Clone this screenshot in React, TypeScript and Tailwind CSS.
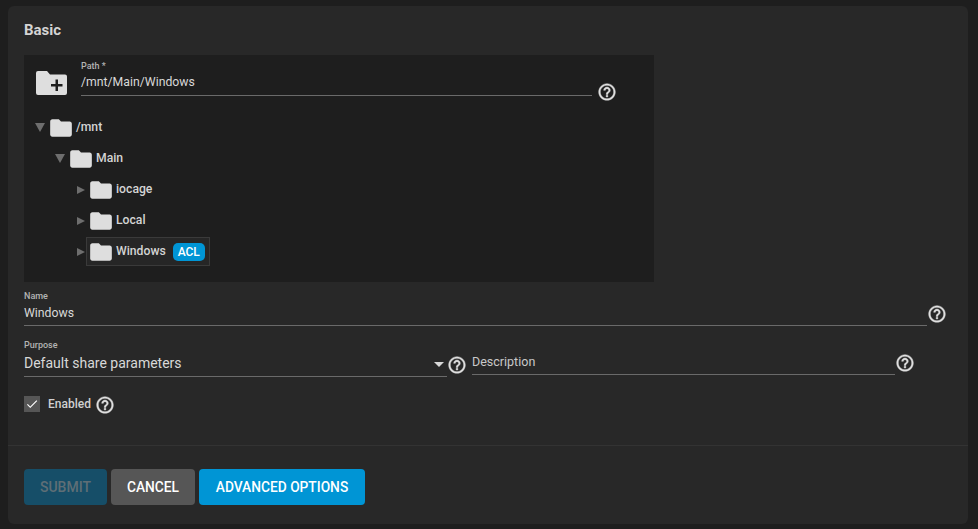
import { MdCheck, MdFolder } from 'react-icons/md';

const ROWS = [
  { name: '/mnt', indent: 'pl-[11px]', open: true },
  { name: 'Main', indent: 'pl-[31px]', open: true },
  { name: 'iocage', indent: 'pl-[51px]', open: false },
  { name: 'Local', indent: 'pl-[51px]', open: false },
  { name: 'Windows', indent: 'pl-[51px]', open: false, acl: true },
];

function Help({ className = '' }: { className?: string }) {
  return (
    <svg
      viewBox="0 0 24 24"
      fill="currentColor"
      stroke="currentColor"
      strokeWidth="0.5"
      className={`h-5 w-5 shrink-0 text-[#e0e0e0] ${className}`}
    >
      <path d="M11 18h2v-2h-2v2zm1-16C6.480 2 2 6.480 2 12s4.480 10 10 10 10-4.480 10-10S17.520 2 12 2zm0 18c-4.410 0-8-3.590-8-8s3.590-8 8-8 8 3.590 8 8-3.590 8-8 8zm0-14c-2.210 0-4 1.790-4 4h2c0-1.100.9-2 2-2s2 .9 2 2c0 2-3 1.750-3 5h2c0-2.250 3-2.500 3-5 0-2.210-1.790-4-4-4z" />
    </svg>
  );
}

function TreeRow({ row }: { row: (typeof ROWS)[number] }) {
  return (
    <div className={`flex h-[31px] items-center ${row.indent}`}>
      {row.open ? (
        <span className="h-0 w-0 border-x-[5px] border-t-[9px] border-x-transparent border-t-[#6e6e6e]" />
      ) : (
        <span className="ml-[2px] h-0 w-0 border-y-[4.5px] border-l-[8px] border-y-transparent border-l-[#6e6e6e]" />
      )}
      <div
        className={`flex h-[29px] items-center ${row.open ? 'ml-[2px]' : 'ml-[1px] pl-[1px]'} ${
          row.acl ? 'w-[124px] border border-[#3a3a3a] bg-[#262626]' : ''
        }`}
      >
        <MdFolder className={`shrink-0 text-[26px] text-[#dedede] ${row.acl ? '' : 'ml-[1px]'}`} />
        <span className="ml-[2px] text-[12.2px] font-medium text-[#d4d4d4]">{row.name}</span>
        {row.acl && (
          <span className="ml-[7px] flex h-[18px] w-[32px] items-center justify-center rounded-[5px] bg-[#0095d5] text-[12px] font-medium text-white">
            ACL
          </span>
        )}
      </div>
    </div>
  );
}

export default function App() {
  return (
    <div className="h-[529px] w-[978px] overflow-hidden bg-[#1e1e1e] pl-2 pt-[6px] font-['Roboto',sans-serif]">
      <div className="h-[518px] w-[960px] rounded-[6px] bg-[#282828]">
        <div className="h-[439px] px-4 pt-[15px]">
          <h3 className="text-[15px] leading-[18px] font-bold text-[#d4d4d4]">Basic</h3>

          <div className="mt-[16px] h-[227px] w-[630px] bg-[#1e1e1e] pt-[6px]">
            <div className="flex items-start pl-[12px]">
              <svg viewBox="0 0 31 24" className="mt-[10px] h-[24px] w-[31px] shrink-0">
                <path
                  d="M2 0h9l3 3.500h15a2 2 0 0 1 2 2V22a2 2 0 0 1-2 2H2a2 2 0 0 1-2-2V2a2 2 0 0 1 2-2z"
                  fill="#dedede"
                />
                <path d="M19.500 8.500h2.500v4.500h4.500v2.500H22V20h-2.500v-4.500H15V13h4.500z" fill="#1e1e1e" />
              </svg>
              <div className="ml-[14px] w-[511px]">
                <div className="text-[9px] leading-[11px] font-medium text-[#b4b4b4]">Path *</div>
                <div className="mt-[1px] h-[23px] border-b border-[#6a6a6a] text-[12.25px] leading-[18px] text-[#d8d8d8]">
                  /mnt/Main/Windows
                </div>
              </div>
              <Help className="ml-[5px] mt-[21px]" />
            </div>

            <div className="mt-[10px]">
              {ROWS.map((row) => (
                <TreeRow key={row.name} row={row} />
              ))}
            </div>
          </div>

          <div className="mt-[9px] flex items-start">
            <div className="w-[903px]">
              <div className="text-[9px] leading-[11px] font-medium text-[#b4b4b4]">Name</div>
              <div className="mt-[1px] h-[23px] border-b border-[#6a6a6a] text-[12.25px] leading-[20px] text-[#d8d8d8]">
                Windows
              </div>
            </div>
            <Help className="mt-[13px]" />
          </div>

          <div className="mt-[14px] flex items-start">
            <div className="w-[423px]">
              <div className="text-[9px] leading-[11px] font-medium text-[#b4b4b4]">Purpose</div>
              <div className="mt-[3px] flex h-[23px] items-start justify-between border-b border-[#6a6a6a] pr-[3px] text-[14px] leading-[18px] text-[#d8d8d8]">
                Default share parameters
                <span className="mt-[8px] h-0 w-0 border-x-[5px] border-t-[5px] border-x-transparent border-t-[#d8d8d8]" />
              </div>
            </div>
            <Help className="mt-[15px]" />
            <div className="ml-[5px] mt-[13px] h-[22px] w-[423px] border-b border-[#6a6a6a] text-[12.5px] leading-[18px] text-[#c8c8c8]">
              Description
            </div>
            <Help className="mt-[13px]" />
          </div>

          <div className="mt-[18px] flex items-center">
            <span className="mb-[2px] flex h-4 w-4 items-center justify-center bg-[#565656]">
              <MdCheck className="text-[14px] text-white" />
            </span>
            <span className="mb-[2px] ml-2 text-[12px] font-medium text-[#d0d0d0]">Enabled</span>
            <Help className="ml-[4px]" />
          </div>
        </div>

        <div className="border-t border-[#333333] px-4 pt-[23px]">
          <div className="flex gap-1">
            <button className="h-[36px] w-[83px] rounded-[4px] bg-[#164e68] text-[14px] font-medium text-[#5f6e76]">
              SUBMIT
            </button>
            <button className="h-[36px] w-[84px] rounded-[4px] bg-[#565656] text-[13.75px] font-medium text-white">
              CANCEL
            </button>
            <button className="h-[36px] w-[166px] rounded-[4px] bg-[#0095d5] text-[13.75px] font-medium text-white">
              ADVANCED OPTIONS
            </button>
          </div>
        </div>
      </div>
    </div>
  );
}
